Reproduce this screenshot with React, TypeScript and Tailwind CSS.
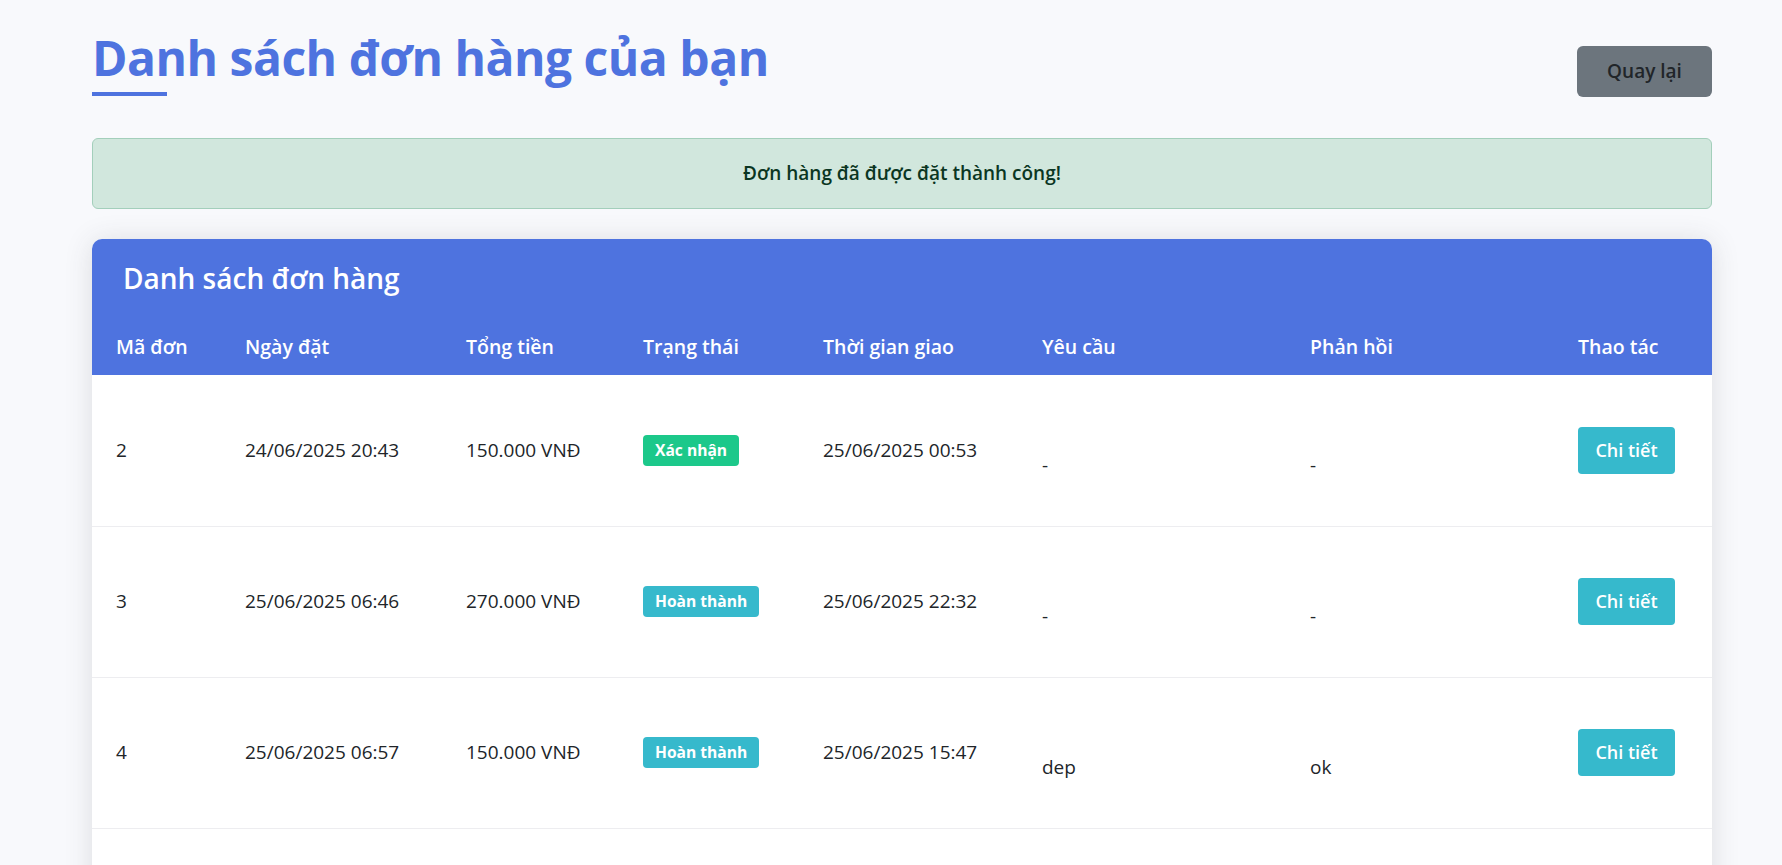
import React from "react";

type Order = {
  id: number;
  date: string;
  total: string;
  status: "Xác nhận" | "Hoàn thành";
  delivery: string;
  request: string;
  reply: string;
};

const orders: Order[] = [
  { id: 2, date: "24/06/2025 20:43", total: "150.000 VNĐ", status: "Xác nhận", delivery: "25/06/2025 00:53", request: "-", reply: "-" },
  { id: 3, date: "25/06/2025 06:46", total: "270.000 VNĐ", status: "Hoàn thành", delivery: "25/06/2025 22:32", request: "-", reply: "-" },
  { id: 4, date: "25/06/2025 06:57", total: "150.000 VNĐ", status: "Hoàn thành", delivery: "25/06/2025 15:47", request: "dep", reply: "ok" },
  { id: 5, date: "25/06/2025 07:12", total: "120.000 VNĐ", status: "Hoàn thành", delivery: "25/06/2025 18:05", request: "-", reply: "-" },
];

const columns = [
  { label: "Mã đơn", w: "w-[129px]" },
  { label: "Ngày đặt", w: "w-[221px]" },
  { label: "Tổng tiền", w: "w-[177px]" },
  { label: "Trạng thái", w: "w-[180px]" },
  { label: "Thời gian giao", w: "w-[219px]" },
  { label: "Yêu cầu", w: "w-[268px]" },
  { label: "Phản hồi", w: "w-[268px]" },
  { label: "Thao tác", w: "" },
];

function StatusBadge({ status }: { status: Order["status"] }) {
  const color = status === "Xác nhận" ? "bg-[#1cc88a]" : "bg-[#36b9cc]";
  return (
    <span
      className={`inline-flex items-center h-[31px] px-[12px] rounded-[4px] text-white text-[15.6px] font-bold ${color}`}
    >
      {status}
    </span>
  );
}

export default function App() {
  return (
    <div
      className="min-h-screen bg-[#f8f9fc] text-[#212529]"
      style={{ fontFamily: '"Open Sans", "Noto Sans", sans-serif' }}
    >
      <div className="ml-[92px] w-[1620px] pt-[29px]">
        <div className="flex items-start justify-between">
          <div>
            <h1 className="text-[48px] leading-[1.2] font-bold text-[#4e73df] tracking-[-0.5px]">
              Danh sách đơn hàng của bạn
            </h1>
            <div className="mt-[5px] h-[4px] w-[75px] bg-[#4e73df]" />
          </div>
          <button className="mt-[17px] h-[51px] w-[135px] rounded-[6px] bg-[#6c757d] text-[19px] font-semibold text-[#212529]">
            Quay lại
          </button>
        </div>

        <div className="mt-[41px] rounded-[6px] border border-[#a3cfbb] bg-[#d1e7dd] py-[21px] text-center text-[19px] leading-[27px] font-semibold text-[#0a3622]">
          Đơn hàng đã được đặt thành công!
        </div>

        <div className="mt-[30px] overflow-hidden rounded-[10px] bg-white shadow-[0_0.15rem_1.75rem_0_rgba(58,59,69,0.15)]">
          <div className="bg-[#4e73df] pl-[31px] pt-[22px]">
            <h2 className="text-[28px] leading-[34px] font-semibold text-white">
              Danh sách đơn hàng
            </h2>
          </div>
          <table className="w-full table-fixed border-collapse text-left">
            <thead className="bg-[#4e73df] text-white">
              <tr>
                {columns.map((c) => (
                  <th
                    key={c.label}
                    className={`${c.w} px-[24px] pt-[38px] pb-[15px] text-[19.5px] leading-[27px] font-semibold`}
                  >
                    {c.label}
                  </th>
                ))}
              </tr>
            </thead>
            <tbody className="text-[19px] leading-[27px]">
              {orders.map((o) => (
                <tr key={o.id} className="border-b border-[#ededf0]">
                  <td className="h-[151px] px-[24px] align-middle">{o.id}</td>
                  <td className="px-[24px] align-middle">{o.date}</td>
                  <td className="px-[24px] align-middle">{o.total}</td>
                  <td className="px-[24px] align-middle">
                    <StatusBadge status={o.status} />
                  </td>
                  <td className="px-[24px] align-middle">{o.delivery}</td>
                  <td className="px-[24px] pt-[30px] align-middle">{o.request}</td>
                  <td className="px-[24px] pt-[30px] align-middle">{o.reply}</td>
                  <td className="px-[24px] align-middle">
                    <button className="h-[47px] w-[97px] rounded-[4px] bg-[#36b9cc] text-[18px] font-semibold text-white">
                      Chi tiết
                    </button>
                  </td>
                </tr>
              ))}
            </tbody>
          </table>
        </div>
      </div>
    </div>
  );
}
